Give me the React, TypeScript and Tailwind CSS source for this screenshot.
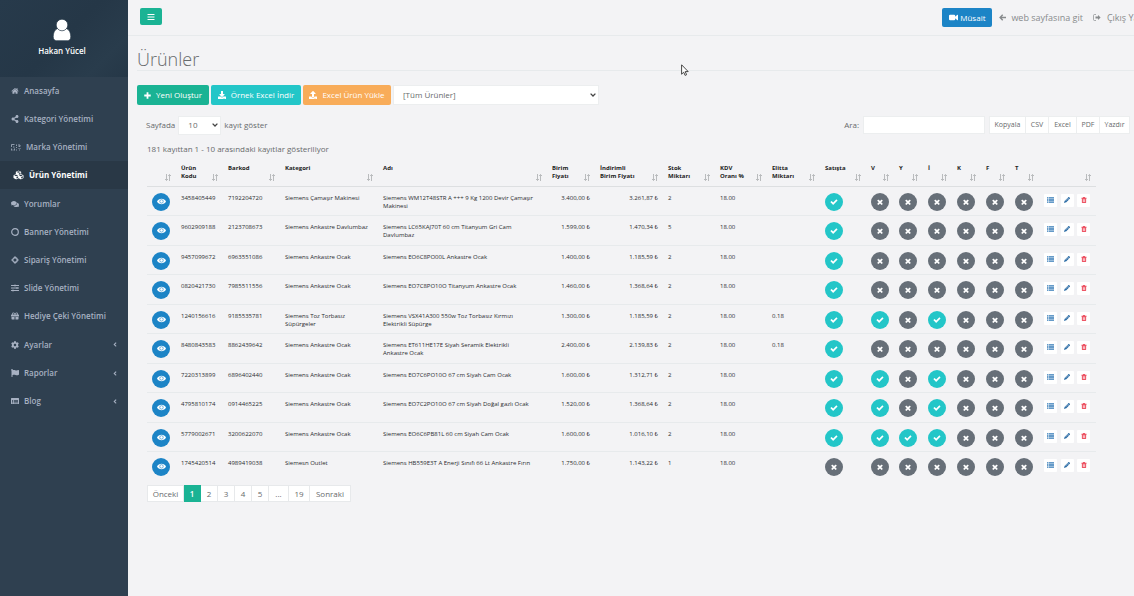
import type { ComponentType, ReactNode } from "react";
import {
  FaShareAlt,
  FaCubes,
  FaComments,
  FaSlidersH,
  FaGift,
  FaCog,
  FaFlag,
  FaAngleLeft,
  FaBars,
  FaDownload,
  FaUpload,
  FaPencilAlt,
} from "react-icons/fa";

type IconProps = { className?: string };
type Icon = ComponentType<IconProps>;

function HomeIcon({ className }: IconProps) {
  return (
    <svg viewBox="0 0 1792 1792" className={className} fill="currentColor" aria-hidden="true">
      <path d="M1472 992v480q0 26-19 45t-45 19h-384v-384h-256v384h-384q-26 0-45-19t-19-45v-480q0-1 .5-3t.5-3l575-474 575 474q1 2 1 6zm223-69l-62 74q-8 9-21 11h-3q-13 0-21-7l-692-577-692 577q-12 8-24 7-13-2-21-11l-62-74q-8-10-7-23.5t11-21.5l719-599q32-26 76-26t76 26l244 204v-195q0-14 9-23t23-9h192q14 0 23 9t9 23v408l219 182q10 8 11 21.5t-7 23.5z" />
    </svg>
  );
}

function BrandIcon({ className }: IconProps) {
  return (
    <svg viewBox="0 0 20 14" className={className} fill="none" stroke="currentColor" strokeWidth="2" strokeOpacity="0.8" aria-hidden="true">
      <path d="M1 13V9M1 6V1h6M4 6h3M7 9v4M4 11v2M11 1v3M11 6v2M11 11v2M14 2h4v3h-3M18 8v2M15 8v1M16 12h2" />
    </svg>
  );
}

function RingIcon({ className }: IconProps) {
  return (
    <svg viewBox="0 0 16 16" className={className} fill="none" stroke="currentColor" strokeWidth="2.4" aria-hidden="true">
      <circle cx="8" cy="8" r="6.6" />
    </svg>
  );
}

function CrosshairIcon({ className }: IconProps) {
  return (
    <svg viewBox="0 0 16 16" className={className} fill="none" stroke="currentColor" strokeWidth="2.4" aria-hidden="true">
      <circle cx="8" cy="8" r="4.6" />
      <path d="M8 .5V5M8 11v4.500M.5 8H5M11 8h4.500" />
    </svg>
  );
}

function TableIcon({ className }: IconProps) {
  return (
    <svg viewBox="0 0 16 14" className={className} aria-hidden="true">
      <path fill="currentColor" fillRule="evenodd" d="M1 1h14a1 1 0 011 1v10a1 1 0 01-1 1H1a1 1 0 01-1-1V2a1 1 0 011-1zM2 5v1.500h2V5zM5.500 5v1.500H14V5zM2 7.500V9h2V7.500zM5.500 7.500V9H14V7.500zM2 10v1.500h2V10zM5.500 10v1.500H14V10z" />
    </svg>
  );
}

function GearIcon({ className }: IconProps) {
  return <FaCog className={className} />;
}

function UserIcon({ className }: IconProps) {
  return (
    <svg viewBox="0 0 18 22" className={className} fill="#fff" stroke="#273949" strokeWidth="0.7" aria-hidden="true">
      <path d="M4.500 9.500h9c3 1.200 4.300 4.500 4.300 8.300 0 2.500-1.500 3.900-3.500 3.900H3.700c-2 0-3.500-1.400-3.500-3.900 0-3.800 1.300-7.100 4.300-8.300z" />
      <circle cx="9" cy="6" r="5.800" />
    </svg>
  );
}

function VideoIcon({ className }: IconProps) {
  return (
    <svg viewBox="0 0 16 12" className={className} fill="currentColor" aria-hidden="true">
      <path d="M2 1h7a2 2 0 012 2v1.800L14.800 1.200q1.200-.4 1.200.6v8.400q0 1-1.200.6L11 7.200V9a2 2 0 01-2 2H2a2 2 0 01-2-2V3a2 2 0 012-2z" />
    </svg>
  );
}

function ArrowLeftIcon({ className }: IconProps) {
  return (
    <svg viewBox="0 0 16 16" className={className} fill="none" stroke="currentColor" strokeWidth="3.200" aria-hidden="true">
      <path d="M8.500 1.500L2.500 8l6 6.500M2.500 8H16" />
    </svg>
  );
}

function ExitIcon({ className }: IconProps) {
  return (
    <svg viewBox="0 0 16 14" className={className} fill="none" stroke="currentColor" strokeWidth="1.400" aria-hidden="true">
      <path d="M6 1H3a2 2 0 00-2 2v8a2 2 0 002 2h3" />
      <path d="M10 2.200L15.200 7 10 11.800V9H5V5h5z" fill="currentColor" stroke="none" />
    </svg>
  );
}

function PlusIcon({ className }: IconProps) {
  return (
    <svg viewBox="0 0 14 14" className={className} fill="none" stroke="currentColor" strokeWidth="3.600" aria-hidden="true">
      <path d="M7 .5v13M.5 7h13" />
    </svg>
  );
}

function EyeIcon({ className }: IconProps) {
  return (
    <svg viewBox="0 0 16 12" className={className} fill="#fff" aria-hidden="true">
      <path d="M0 6.200C1.600 3 4.500 1.300 8 1.300s6.400 1.700 8 4.900c-1.600 3.100-4.500 4.800-8 4.800S1.600 9.300 0 6.200z" />
      <circle cx="8" cy="5.800" r="3.100" fill="#fff" stroke="#1c84c6" strokeWidth="1.100" />
    </svg>
  );
}

function CheckIcon({ className }: IconProps) {
  return (
    <svg viewBox="0 0 1792 1792" className={className} fill="currentColor" aria-hidden="true">
      <path d="M1671 566q0 40-28 68l-724 724-136 136q-28 28-68 28t-68-28l-136-136-362-362q-28-28-28-68t28-68l136-136q28-28 68-28t68 28l294 295 656-657q28-28 68-28t68 28l136 136q28 28 28 68z" />
    </svg>
  );
}

function TimesIcon({ className }: IconProps) {
  return (
    <svg viewBox="0 0 1792 1792" className={className} fill="currentColor" aria-hidden="true">
      <path d="M1490 1322q0 40-28 68l-136 136q-28 28-68 28t-68-28l-294-294-294 294q-28 28-68 28t-68-28l-136-136q-28-28-28-68t28-68l294-294-294-294q-28-28-28-68t28-68l136-136q28-28 68-28t68 28l294 294 294-294q28-28 68-28t68 28l136 136q28 28 28 68t-28 68l-294 294 294 294q28 28 28 68z" />
    </svg>
  );
}

function ListIcon({ className }: IconProps) {
  return (
    <svg viewBox="0 0 14 12" className={className} fill="none" stroke="currentColor" strokeWidth="2.200" aria-hidden="true">
      <path d="M0 1.500h2.500M3.500 1.500H14M0 4.500h2.500M3.500 4.500H14M0 7.500h2.500M3.500 7.500H14M0 10.500h2.500M3.500 10.500H14" />
    </svg>
  );
}

function TrashIcon({ className }: IconProps) {
  return (
    <svg viewBox="0 0 12 14" className={className} aria-hidden="true">
      <path fill="currentColor" fillRule="evenodd" d="M4 0h4l1 2h3v2h-1v9a1 1 0 01-1 1H2a1 1 0 01-1-1V4H0V2h3zM3.500 5.500v6h1v-6zM5.500 5.500v6h1v-6zM7.500 5.500v6h1v-6z" />
    </svg>
  );
}

function SortIcon() {
  return (
    <svg viewBox="0 0 6 7" className="h-[7px] w-[6px] shrink-0 text-[#b9bbbd]" fill="none" stroke="currentColor" strokeWidth="1" aria-hidden="true">
      <path d="M1.500 0v6.500M0 5l1.500 1.500L3 5M4.500 7V.5M3.200 2L4.500.5 6 2" />
    </svg>
  );
}

const menu: { label: string; icon: Icon; active?: boolean; sub?: boolean; wide?: boolean }[] = [
  { label: "Anasayfa", icon: HomeIcon },
  { label: "Kategori Yönetimi", icon: FaShareAlt },
  { label: "Marka Yönetimi", icon: BrandIcon, wide: true },
  { label: "Ürün Yönetimi", icon: FaCubes, active: true },
  { label: "Yorumlar", icon: FaComments },
  { label: "Banner Yönetimi", icon: RingIcon },
  { label: "Sipariş Yönetimi", icon: CrosshairIcon },
  { label: "Slide Yönetimi", icon: FaSlidersH },
  { label: "Hediye Çeki Yönetimi", icon: FaGift },
  { label: "Ayarlar", icon: GearIcon, sub: true },
  { label: "Raporlar", icon: FaFlag, sub: true },
  { label: "Blog", icon: TableIcon, sub: true },
];

type Product = {
  code: string;
  barcode: string;
  category: string;
  name: string;
  price: string;
  sale: string;
  stock: string;
  vat: string;
  elitta: string;
  flags: string;
};

const products: Product[] = [
  { code: "3458405449", barcode: "7192204720", category: "Siemens Çamaşır Makinesi", name: "Siemens WM12T48STR A +++ 9 Kg 1200 Devir Çamaşır Makinesi", price: "3.400,00", sale: "3.261,87", stock: "2", vat: "18.00", elitta: "", flags: "1000000" },
  { code: "9602909188", barcode: "2123708673", category: "Siemens Ankastre Davlumbaz", name: "Siemens LC65KAJ70T 60 cm Titanyum Gri Cam Davlumbaz", price: "1.599,00", sale: "1.470,34", stock: "5", vat: "18.00", elitta: "", flags: "1000000" },
  { code: "9457099672", barcode: "6963551086", category: "Siemens Ankastre Ocak", name: "Siemens EO6C8PO00L Ankastre Ocak", price: "1.400,00", sale: "1.185,59", stock: "2", vat: "18.00", elitta: "", flags: "1000000" },
  { code: "0820421730", barcode: "7985511556", category: "Siemens Ankastre Ocak", name: "Siemens EO7C8PO10O Titanyum Ankastre Ocak", price: "1.460,00", sale: "1.368,64", stock: "2", vat: "18.00", elitta: "", flags: "1000000" },
  { code: "1240156616", barcode: "9185535781", category: "Siemens Toz Torbasız Süpürgeler", name: "Siemens VSX41A300 550w Toz Torbasız Kırmızı Elektrikli Süpürge", price: "1.300,00", sale: "1.185,59", stock: "2", vat: "18.00", elitta: "0.18", flags: "1101000" },
  { code: "8480843583", barcode: "8862439642", category: "Siemens Ankastre Ocak", name: "Siemens ET611HE17E Siyah Seramik Elektrikli Ankastre Ocak", price: "2.400,00", sale: "2.139,83", stock: "2", vat: "18.00", elitta: "0.18", flags: "1000000" },
  { code: "7220313899", barcode: "6896402440", category: "Siemens Ankastre Ocak", name: "Siemens EO7C6PO10O 67 cm Siyah Cam Ocak", price: "1.600,00", sale: "1.312,71", stock: "2", vat: "18.00", elitta: "", flags: "1101000" },
  { code: "4795810174", barcode: "0914465225", category: "Siemens Ankastre Ocak", name: "Siemens EO7C2PO10O 67 cm Siyah Doğal gazlı Ocak", price: "1.520,00", sale: "1.368,64", stock: "2", vat: "18.00", elitta: "", flags: "1101000" },
  { code: "5779002671", barcode: "3200622070", category: "Siemens Ankastre Ocak", name: "Siemens EO6C6PB81L 60 cm Siyah Cam Ocak", price: "1.600,00", sale: "1.016,10", stock: "2", vat: "18.00", elitta: "", flags: "1111000" },
  { code: "1745420514", barcode: "4989419038", category: "Siemesn Outlet", name: "Siemens HB559E3T A Enerji Sınıfı 66 Lt Ankastre Fırın", price: "1.750,00", sale: "1.143,22", stock: "1", vat: "18.00", elitta: "", flags: "0000000" },
];

const columns: { title: string; width: string }[] = [
  { title: "", width: "w-[29px]" },
  { title: "Ürün\nKodu", width: "w-[47px]" },
  { title: "Barkod", width: "w-[57px]" },
  { title: "Kategori", width: "w-[98px]" },
  { title: "Adı", width: "w-auto" },
  { title: "Birim\nFiyatı", width: "w-[48px]" },
  { title: "İndirimli\nBirim Fiyatı", width: "w-[68px]" },
  { title: "Stok\nMiktarı", width: "w-[52px]" },
  { title: "KDV\nOranı %", width: "w-[52px]" },
  { title: "Elitta\nMiktarı", width: "w-[53px]" },
  { title: "Satışta", width: "w-[46px]" },
  { title: "V", width: "w-[28px]" },
  { title: "Y", width: "w-[29px]" },
  { title: "İ", width: "w-[29px]" },
  { title: "K", width: "w-[29px]" },
  { title: "F", width: "w-[29px]" },
  { title: "T", width: "w-[29px]" },
  { title: "", width: "w-[57px]" },
];

function Sidebar() {
  return (
    <aside className="w-32 shrink-0 bg-[#2f4050]">
      <div className="flex h-[77px] flex-col items-center bg-[linear-gradient(135deg,#273a4b_0%,#253747_50%,#293c4c_80%,#253747_100%)] pt-[19px] pr-1 text-white">
        <UserIcon className="h-[22px] w-[18px]" />
        <span className="mt-[5px] text-[8px] leading-[10px] font-semibold">Hakan Yücel</span>
      </div>
      <nav>
        <ul>
          {menu.map(({ label, icon: ItemIcon, active, sub, wide }) => (
            <li key={label} className="flex h-7 nth-[5n]:h-[29px]">
              <a
                href="#"
                className={
                  active
                    ? "flex grow items-center gap-[5px] bg-[#293846] pr-[11px] pl-[13px] font-bold text-white"
                    : "flex grow items-center gap-[5px] pr-[10px] pl-[11px] font-semibold text-[#a7b1c2]"
                }
              >
                <ItemIcon className={wide ? "h-[7px] w-[10px]" : active ? "h-[10px] w-[11px]" : "h-2 w-2"} />
                <span className="grow whitespace-nowrap">{label}</span>
                {sub && <FaAngleLeft className="h-[7px] w-[6px]" />}
              </a>
            </li>
          ))}
        </ul>
      </nav>
    </aside>
  );
}

function TopBar() {
  return (
    <header className="flex h-9 items-start justify-between overflow-hidden border-b border-[#e7eaec] pt-2 pl-3">
      <button type="button" aria-label="Menü" className="flex h-[17px] w-[22px] items-center justify-center rounded-[2px] bg-[#1ab394] text-white">
        <FaBars className="h-2 w-2" />
      </button>
      <div className="-mr-[10px] flex items-center gap-[10px] text-[9px] font-medium whitespace-nowrap text-[#888b8d]">
        <div className="flex items-center gap-[7px]">
          <button type="button" className="flex h-[19px] w-[50px] items-center justify-center gap-0.5 rounded-[2px] bg-[#1c84c6] text-[8px] text-white">
            <VideoIcon className="h-[7px] w-[9px]" />
            Müsait
          </button>
          <a href="#" className="flex items-center gap-[5px]">
            <ArrowLeftIcon className="h-[7px] w-[7px]" />
            web sayfasına git
          </a>
        </div>
        <a href="#" className="flex items-center gap-[6px]">
          <ExitIcon className="h-[7px] w-2" />
          Çıkış Yap
        </a>
      </div>
    </header>
  );
}

function SelectBox({ id, label, value, box, field }: { id: string; label: string; value: string; box: string; field: string }) {
  return (
    <span className={box}>
      <select id={id} aria-label={label} className={field}>
        <option>{value}</option>
      </select>
      <svg viewBox="0 0 6 4" className="pointer-events-none col-start-1 row-start-1 mr-[3px] h-1 w-[6px] self-center justify-self-end" fill="none" stroke="#444" strokeWidth="1.300" aria-hidden="true">
        <path d="M.6.6L3 3 5.400.6" />
      </svg>
    </span>
  );
}

function ActionButton({ className, icon, children }: { className: string; icon: ReactNode; children: ReactNode }) {
  return (
    <button type="button" className={className}>
      {icon}
      {children}
    </button>
  );
}

function Flag({ on }: { on: boolean }) {
  return on ? (
    <button type="button" aria-label="Açık" className="flex size-[18px] items-center justify-center rounded-full bg-[#23c6c8] text-white">
      <CheckIcon className="size-2" />
    </button>
  ) : (
    <button type="button" aria-label="Kapalı" className="flex size-[18px] items-center justify-center rounded-full bg-[#676f78] text-white">
      <TimesIcon className="size-2" />
    </button>
  );
}

function ProductTable() {
  return (
    <table className="w-full table-fixed text-[6px] leading-[8px] text-[#2a2c2f]">
      <thead>
        <tr className="border-b border-[#dddfe1]">
          {columns.map((c, i) => (
            <th key={i} scope="col" className={`${c.width} h-[23px] px-[5px] pb-1 text-left align-top font-bold text-[#222]`}>
              <div className="flex h-[18px] items-start justify-between">
                <span className="w-0 grow pt-px whitespace-pre">{c.title}</span>
                <span className="self-end">
                  <SortIcon />
                </span>
              </div>
            </th>
          ))}
        </tr>
      </thead>
      <tbody>
        {products.map((p) => (
          <tr key={p.code} className="h-[29px] border-b border-[#e7eaec] last:border-0 even:h-[30px] [&>td]:pt-[7px] [&>td]:pl-[5px] [&>td]:align-top">
            <td>
              <button type="button" aria-label="Görüntüle" className="-mt-px flex size-[18px] items-center justify-center rounded-full bg-[#1c84c6]">
                <EyeIcon className="h-[7px] w-[9px]" />
              </button>
            </td>
            <td>{p.code}</td>
            <td>{p.barcode}</td>
            <td className="pr-[5px]">{p.category}</td>
            <td className="pr-3">{p.name}</td>
            <td className="pr-[5px] text-right whitespace-nowrap">{p.price} ₺</td>
            <td className="pr-[5px] text-right whitespace-nowrap">{p.sale} ₺</td>
            <td>{p.stock}</td>
            <td>{p.vat}</td>
            <td>{p.elitta}</td>
            {p.flags.split("").map((f, i) => (
              <td key={i}>
                <div className="-mt-px">
                  <Flag on={f === "1"} />
                </div>
              </td>
            ))}
            <td className="pr-[6px]">
              <div className="flex justify-between">
                <button type="button" aria-label="Detay" className="flex h-[13px] w-[13px] items-center justify-center rounded-[1px] bg-white text-[#337ab7]">
                  <ListIcon className="h-[6px] w-[7px]" />
                </button>
                <button type="button" aria-label="Düzenle" className="flex h-[13px] w-[13px] items-center justify-center rounded-[1px] bg-white text-[#2a6ba5]">
                  <FaPencilAlt className="size-[6px]" />
                </button>
                <button type="button" aria-label="Sil" className="flex h-[13px] w-[13px] items-center justify-center rounded-[1px] bg-white text-[#ed5565]">
                  <TrashIcon className="size-[6px]" />
                </button>
              </div>
            </td>
          </tr>
        ))}
      </tbody>
    </table>
  );
}

const pages = [
  { label: "Önceki", width: "w-[37px]" },
  { label: "1", width: "w-[17px]" },
  { label: "2", width: "w-[17px]" },
  { label: "3", width: "w-[17px]" },
  { label: "4", width: "w-[17px]" },
  { label: "5", width: "w-[17px]" },
  { label: "...", width: "w-[20px]" },
  { label: "19", width: "w-[21px]" },
  { label: "Sonraki", width: "w-[41px]" },
];

const exportFormats = [
  { label: "Kopyala", width: "w-[37px]" },
  { label: "CSV", width: "w-[23px]" },
  { label: "Excel", width: "w-[28px]" },
  { label: "PDF", width: "w-[23px]" },
  { label: "Yazdır", width: "w-[30px]" },
];

export default function App() {
  return (
    <div className="relative flex min-h-screen overflow-hidden bg-[#f3f3f5] font-['Open_Sans','Noto_Sans',sans-serif] text-[8px] text-[#676a6c]">
      <Sidebar />
      <div className="min-w-0 grow">
        <TopBar />
        <h1 className="ml-[9px] h-[35px] border-b border-[#e7eaec] pt-[10px] text-[18px] leading-[26px] font-light">Ürünler</h1>
        <main className="pt-[14px] pr-1 pl-[9px]">
          <div className="flex items-center gap-0.5">
            <ActionButton className="flex h-5 w-[72px] items-center justify-center gap-[5px] rounded-[2px] bg-[#1ab394] font-medium whitespace-nowrap text-white" icon={<PlusIcon className="size-[7px]" />}>
              Yeni Oluştur
            </ActionButton>
            <ActionButton className="flex h-5 w-[90px] items-center justify-center gap-[5px] rounded-[2px] bg-[#23c6c8] font-medium whitespace-nowrap text-white" icon={<FaDownload className="size-2" />}>
              Örnek Excel İndir
            </ActionButton>
            <ActionButton className="flex h-5 w-[88px] items-center justify-center gap-[5px] rounded-[2px] bg-[#f8ac59] font-medium whitespace-nowrap text-white" icon={<FaUpload className="size-2" />}>
              Excel Ürün Yükle
            </ActionButton>
            <SelectBox
              id="filter"
              label="Ürün filtresi"
              value="[Tüm Ürünler]"
              box="grid w-[206px]"
              field="col-start-1 row-start-1 h-5 appearance-none border border-[#eceeef] bg-white pl-[9px]"
            />
          </div>
          <div className="mt-[10px] flex items-center justify-between pl-[9px]">
            <div className="flex h-5 items-center gap-[3px]">
              <label htmlFor="size">Sayfada</label>
              <SelectBox
                id="size"
                label="Sayfada kayıt"
                value="10"
                box="grid w-[43px]"
                field="col-start-1 row-start-1 h-[19px] appearance-none border border-[#eceeef] bg-white pl-[9px]"
              />
              <span>kayıt göster</span>
            </div>
            <div className="flex items-center">
              <label htmlFor="search" className="mr-1">
                Ara:
              </label>
              <input id="search" type="search" className="mr-1 h-[18px] w-[122px] border border-[#eceeef] bg-white px-1" />
              <div className="flex text-[7px]">
                {exportFormats.map((e) => (
                  <button key={e.label} type="button" className={`${e.width} h-[18px] border-y border-r border-[#eceeef] bg-white first:border-l`}>
                    {e.label}
                  </button>
                ))}
              </div>
            </div>
          </div>
          <div className="pr-[34px] pl-[10px]">
            <p className="mt-2 leading-[12px]">181 kayıttan 1 - 10 arasındaki kayıtlar gösteriliyor</p>
            <div className="mt-2">
              <ProductTable />
            </div>
            <nav aria-label="Sayfalar" className="mt-1 flex">
              {pages.map((p) => (
                <a
                  key={p.label}
                  href="#"
                  className={`${p.width} ${
                    p.label === "1" ? "border-[#1ab394] bg-[#1ab394] font-semibold text-white" : "border-[#e7e9eb] bg-white"
                  } flex h-[17px] items-center justify-center border-y border-r first:border-l`}
                >
                  {p.label}
                </a>
              ))}
            </nav>
          </div>
        </main>
      </div>
      <svg viewBox="0 0 8 12" className="pointer-events-none absolute top-[64px] left-[681px] h-3 w-2" fill="#fff" stroke="#333" strokeWidth="0.9" aria-hidden="true">
        <path d="M.6.8v9.400l2.100-2 1.400 3.200 1.500-.7-1.400-3.100h3z" />
      </svg>
    </div>
  );
}
